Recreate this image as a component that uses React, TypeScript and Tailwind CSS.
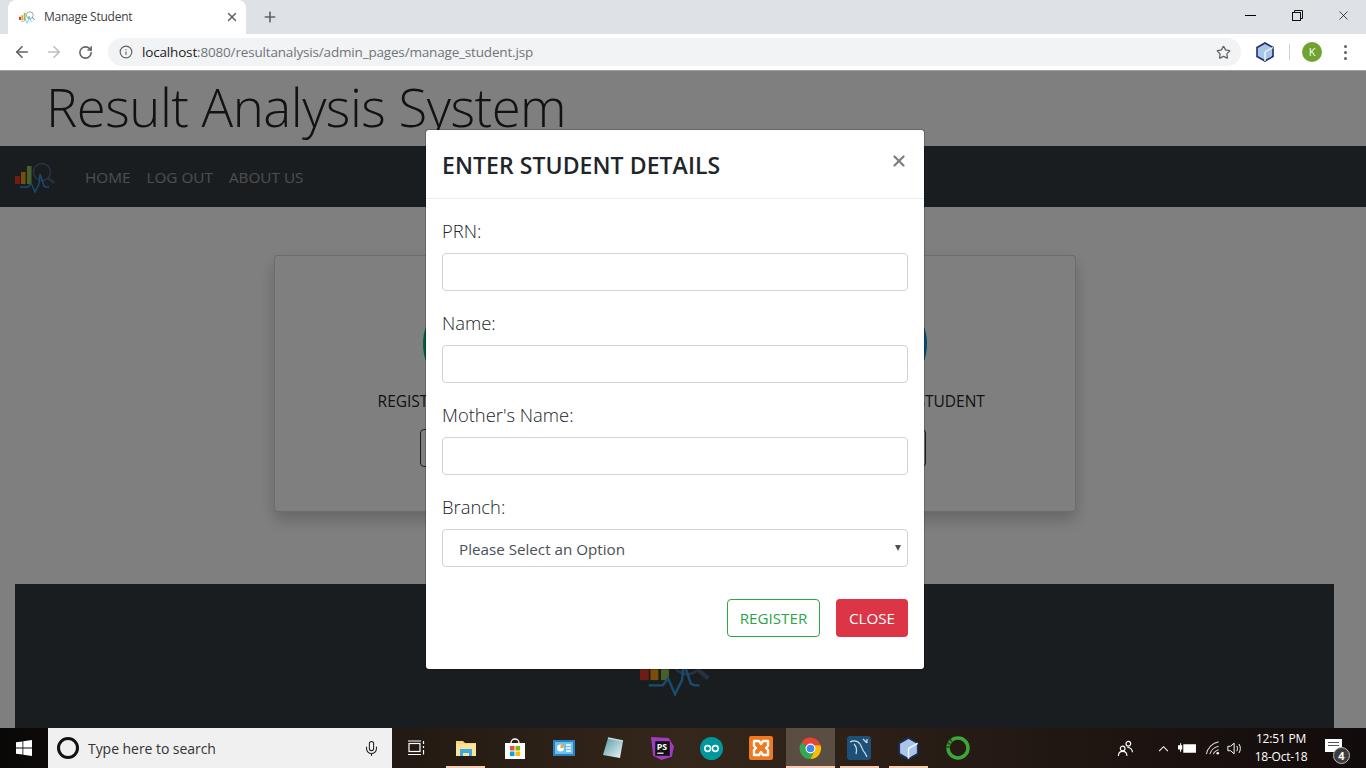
import { ArrowLeft, ArrowRight, RotateCw, Info, Star, X, Plus, Mic } from 'lucide-react';

const font = "font-['Open_Sans','Liberation_Sans',sans-serif]";

function ResultLogo({ className, faded }: { className: string; faded?: boolean }) {
  return (
    <svg viewBox="0 0 40 33" className={className} fill="none">
      <rect x="0" y="16" width="5" height="8" fill="#e0392b" />
      <rect x="6" y="12" width="4.5" height="12" fill="#f39c12" />
      <rect x="12" y="6" width="4.5" height="18" fill="#8bc34a" />
      <circle cx="27" cy="12" r="8.5" stroke={faded ? '#4a6480' : '#5d7a94'} strokeWidth="1.6" />
      <path d="M33 18l6 5" stroke={faded ? '#4a6480' : '#5d7a94'} strokeWidth="2.4" />
      <path d="M5 27H13L16 23L20 32L24 24L25 14L29 26L31 27H34" stroke="#3498db" strokeWidth="1.4" />
    </svg>
  );
}

function BrowserChrome() {
  return (
    <div className={`shrink-0 ${font}`}>
      <div className="flex h-[34px] items-end bg-[#dee1e6] pl-2">
        <div className="flex h-[34px] w-[238px] items-center rounded-t-lg bg-white pl-[11px] pr-[7px]">
          <ResultLogo className="h-[14px] w-[16px]" />
          <span className="ml-[9px] text-[12px] tracking-[-0.25px] text-[#3c4043]">Manage Student</span>
          <X className="ml-auto h-[14px] w-[14px] text-[#5f6368]" strokeWidth={2.5} />
        </div>
        <div className="flex h-[34px] w-[48px] items-center justify-center">
          <Plus className="h-[16px] w-[16px] text-[#5f6368]" strokeWidth={2.5} />
        </div>
        <div className="ml-auto flex h-[34px] items-start">
          <div className="flex h-[30px] w-[47px] items-center justify-center">
            <div className="h-px w-[11px] bg-black" />
          </div>
          <div className="flex h-[30px] w-[46px] items-center justify-center">
            <svg viewBox="0 0 11 11" className="h-[11px] w-[11px]" fill="none" stroke="#111" strokeWidth="1">
              <rect x="0.5" y="2.5" width="8" height="8" />
              <path d="M2.5 2.5v-2h8v8h-2" />
            </svg>
          </div>
          <div className="flex h-[30px] w-[46px] items-center justify-center">
            <X className="h-[15px] w-[15px] text-[#111]" strokeWidth={1.2} />
          </div>
        </div>
      </div>
      <div className="flex h-[36px] items-center bg-white pl-[13px]">
        <ArrowLeft className="h-[18px] w-[18px] text-[#5f6368]" strokeWidth={2.2} />
        <ArrowRight className="ml-[14px] h-[18px] w-[18px] text-[#bcbec1]" strokeWidth={2.2} />
        <RotateCw className="ml-[15px] h-[15px] w-[15px] text-[#5f6368]" strokeWidth={2.5} />
        <div className="ml-[15px] flex h-[28px] w-[1133px] items-center rounded-full bg-[#f1f3f4] pl-[11px] pr-[10px]">
          <Info className="h-[14px] w-[14px] text-[#5f6368]" strokeWidth={2} />
          <span className="ml-[9px] text-[13.5px] tracking-[-0.17px] text-[#70757a]">
            <span className="text-[#202124]">localhost</span>:8080/resultanalysis/admin_pages/manage_student.jsp
          </span>
          <Star className="ml-auto h-[15px] w-[15px] text-[#5f6368]" strokeWidth={2} />
        </div>
        <svg viewBox="0 0 20 20" className="ml-[14px] h-[20px] w-[20px]">
          <path d="M10 1l8 4.500v9L10 19l-8-4.500v-9z" fill="#a9c6e8" stroke="#1f2f66" strokeWidth="1.6" />
          <path d="M10 10l8-4.500M10 10v9" stroke="#eef5fc" strokeWidth="1.4" />
        </svg>
        <div className="ml-[14px] h-[16px] w-px bg-[#d0d2d5]" />
        <div className="ml-[12px] flex h-[20px] w-[20px] items-center justify-center rounded-full bg-[#6fa22f] text-[11px] text-white">K</div>
        <div className="ml-[22px] flex flex-col gap-[3px]">
          <div className="h-[3px] w-[3px] rounded-full bg-[#5f6368]" />
          <div className="h-[3px] w-[3px] rounded-full bg-[#5f6368]" />
          <div className="h-[3px] w-[3px] rounded-full bg-[#5f6368]" />
        </div>
      </div>
    </div>
  );
}

function ActionColumn({ title, circle, button, buttonWidth }: { title: string; circle: string; button: string; buttonWidth: string }) {
  return (
    <div className="flex flex-col items-center">
      <div className={`h-[104px] w-[104px] rounded-full ${circle}`} />
      <p className="whitespace-nowrap text-[15.5px] leading-[10px] text-[#212529]">{title}</p>
      <button className={`mt-[23px] h-[38px] rounded border border-[#343a40] text-[14px] text-[#343a40] ${buttonWidth}`}>{button}</button>
    </div>
  );
}

function PageBehind() {
  return (
    <div className="h-full w-full bg-white">
      <div className="h-[76px] pl-[46px]">
        <h1 className="text-[52.7px] font-light leading-[74px] tracking-[-0.5px] text-[#212529]">Result Analysis System</h1>
      </div>
      <nav className="flex h-[61px] items-center bg-[#343a40] pl-[15px]">
        <ResultLogo className="h-[33px] w-[40px]" faded />
        <div className="ml-[30px] mt-[2px] flex gap-4 text-[15.3px] text-white/50">
          <span>HOME</span>
          <span>LOG OUT</span>
          <span>ABOUT US</span>
        </div>
      </nav>
      <div className="w-[1349px]">
        <div className="flex justify-center pt-12">
          <div className="grid h-[257px] w-[802px] grid-cols-2 rounded border border-black/15 bg-white pt-[36px] shadow-[0_8px_16px_rgba(0,0,0,0.2)]">
            <ActionColumn title="REGISTER A NEW STUDENT" circle="bg-[#00b97c]" button="REGISTER" buttonWidth="w-[109px]" />
            <ActionColumn title="UPDATE / REMOVE A STUDENT" circle="bg-[#0a95d8]" button="MANAGE" buttonWidth="w-[102px]" />
          </div>
        </div>
        <div className="mx-[15px] mt-[72px] flex h-[160px] justify-center bg-[#343a40] pt-[54px]">
          <ResultLogo className="h-[58px] w-[70px]" faded />
        </div>
      </div>
    </div>
  );
}

function Field({ label, children }: { label: string; children: React.ReactNode }) {
  return (
    <div className="mb-4">
      <label className="mb-2 block pt-px text-[18.4px] font-light leading-[29px] text-[#212529]">{label}</label>
      {children}
    </div>
  );
}

function StudentModal() {
  const inputClass = 'block h-[38px] w-full rounded border border-[#ced4da] bg-white px-3';
  return (
    <div className="absolute inset-0 overflow-hidden border-t border-[#a0a0a0] bg-black/50">
      <div className="ml-[425px] mt-[58px] w-[500px] rounded border border-black/20 bg-white bg-clip-padding">
        <div className="flex h-[69px] items-start justify-between border-b border-[#e9ecef] p-4">
          <h5 className="mt-px text-[23px] font-semibold leading-9 tracking-[0.07px] text-[#212529]">ENTER STUDENT DETAILS</h5>
          <X className="mt-[6px] h-[18px] w-[18px] text-[#808080]" strokeWidth={3} />
        </div>
        <div className="p-4 pb-0">
          <Field label="PRN:"><input className={inputClass} /></Field>
          <Field label="Name:"><input className={inputClass} /></Field>
          <Field label="Mother's Name:"><input className={inputClass} /></Field>
          <Field label="Branch:">
            <div className="flex h-[38px] items-center justify-between rounded border border-[#ced4da] pl-4 pr-[6px] text-[15.2px] text-[#495057]">
              <span className="mt-[2px]">Please Select an Option</span>
              <span className="border-x-[3.5px] border-t-[6px] border-x-transparent border-t-[#495057]" />
            </div>
          </Field>
        </div>
        <div className="flex justify-end gap-4 p-4 pb-8">
          <button className="h-[38px] w-[93px] rounded border border-[#28a745] text-[15.2px] text-[#28a745]">REGISTER</button>
          <button className="h-[38px] w-[72px] rounded bg-[#dc3545] text-[15.2px] text-white">CLOSE</button>
        </div>
      </div>
    </div>
  );
}

function TaskIcon({ children, bar, active }: { children: React.ReactNode; bar?: boolean; active?: boolean }) {
  return (
    <div className={`relative flex h-10 w-[49.2px] items-center justify-center ${active ? 'bg-[#5a4d42]' : ''}`}>
      {children}
      {bar && <div className={`absolute bottom-0 h-[2px] bg-[#f3cdb3] ${active ? 'inset-x-0' : 'inset-x-[5px]'}`} />}
    </div>
  );
}

function Taskbar() {
  return (
    <div className={`flex h-10 shrink-0 items-center bg-gradient-to-r from-[#0a0807] via-[#35271b] to-[#120b0b] ${font}`}>
      <div className="flex h-10 w-12 items-center justify-center">
        <svg viewBox="0 0 16 16" className="h-[16px] w-[16px]" fill="#fff">
          <path d="M0 2.300l6.500-.9v6.200H0zM7.300 1.300L16 0v7.600H7.300zM0 8.400h6.500v6.200L0 13.700zM7.300 8.400H16V16l-8.700-1.300z" />
        </svg>
      </div>
      <div className="flex h-10 w-[344px] items-center bg-[#f0f0f0] pl-[9px] pr-[12px]">
        <div className="h-[22px] w-[22px] rounded-full border-[3px] border-[#111]" />
        <span className="ml-[9px] text-[14px] tracking-[-0.05px] text-[#333]">Type here to search</span>
        <Mic className="ml-auto h-[17px] w-[17px] text-[#222]" strokeWidth={1.5} />
      </div>
      <TaskIcon>
        <svg viewBox="0 0 18 16" className="h-[16px] w-[18px]" fill="none" stroke="#fff" strokeWidth="1.2">
          <rect x="1" y="3.500" width="11" height="8" />
          <path d="M0 1h13M0 14.500h13M15.500 1v3M15.500 6v2M15.500 10v4.500" />
        </svg>
      </TaskIcon>
      <TaskIcon bar>
        <svg viewBox="0 0 22 20" className="h-[20px] w-[22px]">
          <path d="M1 3h7l2 2h11v13H1z" fill="#f7d774" />
          <path d="M1 6h20v12H1z" fill="#fbe39a" />
          <path d="M5 11h12v7h-3v-3H8v3H5z" fill="#3aa9e8" />
        </svg>
      </TaskIcon>
      <TaskIcon>
        <svg viewBox="0 0 24 24" className="h-[24px] w-[24px]">
          <path d="M8 7a4 4 0 018 0" fill="none" stroke="#fff" strokeWidth="1.400" />
          <path d="M2 7h20v16H2z" fill="#fff" />
          <rect x="7" y="10" width="4.500" height="4.500" fill="#f25022" />
          <rect x="12.500" y="10" width="4.500" height="4.500" fill="#7fba00" />
          <rect x="7" y="15.500" width="4.500" height="4.500" fill="#00a4ef" />
          <rect x="12.500" y="15.500" width="4.500" height="4.500" fill="#ffb900" />
        </svg>
      </TaskIcon>
      <TaskIcon>
        <svg viewBox="0 0 22 16" className="h-[16px] w-[22px]">
          <rect width="22" height="16" fill="#2a7fc1" />
          <rect x="2" y="2" width="18" height="12" fill="#6cc0ef" />
          <circle cx="7.500" cy="8" r="3.500" fill="#fff" />
          <path d="M7.500 8V4.500a3.500 3.500 0 013.500 3.500z" fill="#f6a623" />
          <path d="M13 5h5M13 8h5M13 11h5" stroke="#fff" strokeWidth="1.400" />
        </svg>
      </TaskIcon>
      <TaskIcon>
        <svg viewBox="0 0 24 24" className="h-[24px] w-[24px]">
          <defs>
            <linearGradient id="pad" x1="0" y1="0" x2="1" y2="1">
              <stop offset="0" stopColor="#4f9aa3" />
              <stop offset="1" stopColor="#f1f7f8" />
            </linearGradient>
          </defs>
          <path d="M7 2l15 3-3 17-17-3z" fill="url(#pad)" />
          <path d="M7 2l15 3" stroke="#cfd8da" strokeWidth="1.500" />
        </svg>
      </TaskIcon>
      <TaskIcon>
        <svg viewBox="0 0 24 24" className="h-[25px] w-[25px]">
          <path d="M1 1l17 1 5 8-2 10-10 3-8-4z" fill="#a23bc0" />
          <path d="M5 5h14v14H5z" fill="#111" />
          <path d="M7 16.500h6" stroke="#fff" strokeWidth="1.200" />
          <text x="6.500" y="13" fontSize="8.500" fontWeight="700" fill="#fff" fontFamily="Open Sans">PS</text>
        </svg>
      </TaskIcon>
      <TaskIcon>
        <svg viewBox="0 0 24 24" className="h-[23px] w-[23px]">
          <circle cx="12" cy="12" r="12" fill="#00979d" />
          <circle cx="8" cy="12" r="3" fill="none" stroke="#fff" strokeWidth="1.600" />
          <circle cx="16" cy="12" r="3" fill="none" stroke="#fff" strokeWidth="1.600" />
        </svg>
      </TaskIcon>
      <TaskIcon>
        <svg viewBox="0 0 24 24" className="h-[24px] w-[24px]">
          <rect width="24" height="24" rx="2" fill="#f0781f" />
          <path d="M5 5h5l2 3 2-3h5v5l-2 2 2 2v5h-5l-2-3-2 3H5v-5l2-2-2-2z" fill="none" stroke="#fff" strokeWidth="2.400" strokeLinejoin="round" />
        </svg>
      </TaskIcon>
      <TaskIcon bar active>
        <svg viewBox="0 0 24 24" className="h-[23px] w-[23px]">
          <path d="M12 12L2.500 6A11 11 0 0122.500 8.500H12z" fill="#ea4335" />
          <path d="M12 23a11 11 0 0010.500-14.500H12l-3 7z" fill="#fbbc05" />
          <path d="M2.500 6A11 11 0 0012 23l4-7.500-4-3.500z" fill="#34a853" />
          <circle cx="12" cy="12" r="5.200" fill="#fff" />
          <circle cx="12" cy="12" r="4" fill="#4285f4" />
        </svg>
      </TaskIcon>
      <TaskIcon bar>
        <svg viewBox="0 0 24 24" className="h-[24px] w-[24px]" fill="none">
          <rect width="24" height="24" rx="3" fill="#1e4f77" />
          <path d="M3 6c4-2 8-1 10 2s2 6 5 9l2 4M7 8c2 2 3 6 2 10" stroke="#cfe0ea" strokeWidth="1.200" />
          <path d="M16 3l4 4M20 3v4" stroke="#cfe0ea" strokeWidth="1.200" />
        </svg>
      </TaskIcon>
      <TaskIcon bar>
        <svg viewBox="0 0 20 20" className="h-[23px] w-[23px]">
          <path d="M10 1l8 4.500v9L10 19l-8-4.500v-9z" fill="#a9c6e8" stroke="#1f2f66" strokeWidth="1.400" />
          <path d="M10 10l8-4.500M10 10v9" stroke="#eef5fc" strokeWidth="1.300" />
        </svg>
      </TaskIcon>
      <TaskIcon>
        <svg viewBox="0 0 24 24" className="h-[24px] w-[24px]" fill="none">
          <circle cx="12" cy="12" r="10" stroke="#3aa935" strokeWidth="3.500" />
          <path d="M2 12a10 10 0 014-8" stroke="#1f5c1d" strokeWidth="3.500" strokeDasharray="2 1.500" />
        </svg>
      </TaskIcon>
      <div className="ml-auto flex h-10 items-center text-white">
        <svg viewBox="0 0 18 18" className="h-[17px] w-[17px]" fill="none" stroke="#fff" strokeWidth="1.200">
          <circle cx="6" cy="9" r="2.500" />
          <circle cx="12" cy="4" r="2.500" />
          <path d="M1.500 17c0-3 2-5 4.500-5s4.500 2 4.500 5M11 8c3 0 5 2 5.500 5" />
        </svg>
        <svg viewBox="0 0 12 8" className="ml-[24px] h-[7px] w-[11px]" fill="none" stroke="#fff" strokeWidth="1.200">
          <path d="M1 7l5-5 5 5" />
        </svg>
        <svg viewBox="0 0 18 12" className="ml-[9px] h-[13px] w-[19px]" fill="#fff">
          <path d="M0 3h2V1h1v2h1v4H3v2H2V7H0zM5 2h12v8H5z" />
        </svg>
        <svg viewBox="0 0 16 16" className="ml-[8px] h-[14px] w-[15px]" fill="none" stroke="#cfcfcf" strokeWidth="1.200">
          <path d="M1 15C2 8 8 2 15 1M5 15c1-4 5-8 10-9M9 15c.5-2 3-4 6-5" />
          <circle cx="14" cy="14" r="1.500" fill="#fff" stroke="none" />
        </svg>
        <svg viewBox="0 0 18 16" className="ml-[7px] h-[15px] w-[16px]" fill="none" stroke="#fff" strokeWidth="1.100">
          <path d="M1 5.500h3L8 2v12l-4-3.500H1zM11 5c1 2 1 4 0 6M13.500 3c2 3 2 7 0 10" />
        </svg>
        <div className="ml-[7px] w-[62px] text-center text-[12px] leading-[18px] tracking-[-0.2px]">
          <div>12:51 PM</div>
          <div>18-Oct-18</div>
        </div>
        <div className="relative ml-[13px] mr-[24px] mb-[6px] h-[13px] w-[17px] bg-white">
          <div className="absolute left-[3px] top-[3px] h-px w-[11px] bg-[#555]" />
          <div className="absolute left-[3px] top-[6px] h-px w-[11px] bg-[#555]" />
          <div className="absolute -bottom-[12px] -right-[8px] flex h-[17px] w-[17px] items-center justify-center rounded-full border border-[#bbb] bg-[#3c3c3c] text-[11px] font-bold leading-none text-white">4</div>
        </div>
      </div>
    </div>
  );
}

export default function App() {
  return (
    <div className={`flex h-screen w-full flex-col overflow-hidden bg-white ${font}`}>
      <BrowserChrome />
      <div className="relative min-h-0 flex-1 overflow-hidden">
        <PageBehind />
        <StudentModal />
      </div>
      <Taskbar />
    </div>
  );
}
